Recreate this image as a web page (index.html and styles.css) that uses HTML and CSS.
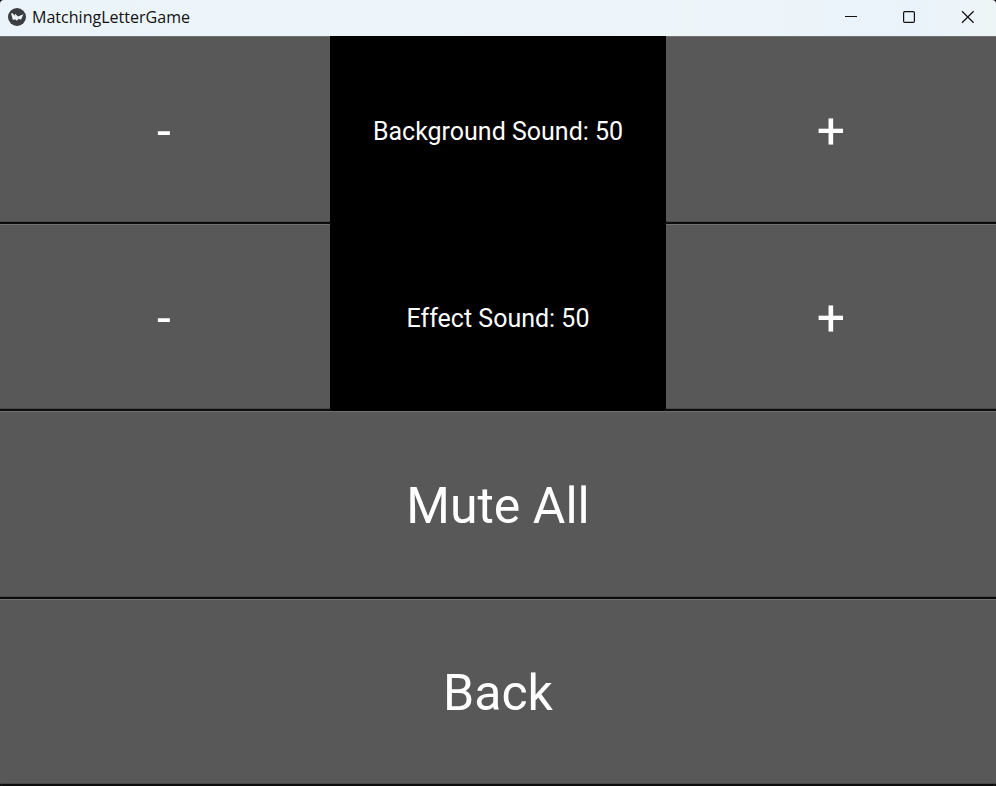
FILE: index.html
```
<!DOCTYPE html>
<html lang="en">
<head>
<meta charset="utf-8">
<title>MatchingLetterGame</title>
<link rel="stylesheet" href="styles.css">
</head>
<body>
<div class="window">
  <header class="titlebar">
    <svg class="logo" width="18" height="18" viewBox="0 0 18 18"><circle cx="9" cy="9" r="9" fill="#3b3d40"/><path d="M3 5.2 5 5.6 6.5 7.8 7.2 5.8 10 8.6 15.4 6.2 13 11.8 10.8 10.8 8.8 12.7 7.6 11.6 4.8 11.8Z" fill="#edf3f7"/></svg>
    <svg class="title" width="180" height="36"><text x="0" y="23" textLength="158" lengthAdjust="spacingAndGlyphs">MatchingLetterGame</text></svg>
    <svg class="controls" width="166" height="36" fill="none" stroke="#111" stroke-width="1.2"><path d="M15 16.5H27"/><rect x="73.6" y="11.6" width="10.8" height="10.8" rx="1.2"/><path d="M132 11.3 143.6 22.7M143.6 11.3 132 22.7"/></svg>
  </header>
  <main class="settings">
    <div class="row">
      <button class="key left">-</button>
      <div class="label">Background Sound: 50</div>
      <button class="key right">+</button>
    </div>
    <div class="row">
      <button class="key left">-</button>
      <div class="label">Effect Sound: 50</div>
      <button class="key right">+</button>
    </div>
    <button class="key">Mute All</button>
    <button class="key">Back</button>
  </main>
</div>
</body>
</html>
```
FILE: styles.css
```
* { box-sizing: border-box; }
body { margin: 0; background: #000; }
.window { width: 996px; height: 786px; display: flex; flex-direction: column; background: #3a3a3a; border-radius: 4px; overflow: hidden; }
.titlebar { height: 36px; flex: none; display: flex; align-items: center; padding-left: 8px; background: linear-gradient(90deg, #ebf4fa, #edf5f9 70%, #eaf3fb 92%, #edf5f6); }
.logo { margin: -2px 6px 0 0; }
.title { flex: none; }
.title text { font: 17px "Open Sans", "Noto Sans", sans-serif; fill: #111; }
.controls { margin-left: auto; }
.settings { flex: 1; display: grid; grid-template-rows: repeat(4, 187.5px); background: #000; }
.row { display: grid; grid-template-columns: repeat(3, 332px); }
.key { appearance: none; margin: 0; padding: 4px 0 0; border: 0 solid #0c0c0c; border-bottom-width: 2px; background: #585858; box-shadow: inset 0 1px #707070, inset 0 -1px #484848; color: #fff; font: 50px/1 Roboto, sans-serif; }
.left { border-right: 2px solid #000; padding-right: 2px; }
.right { border-left: 2px solid #000; }
.label { display: flex; align-items: center; justify-content: center; padding-top: 3px; color: #fff; font: 25px/1 Roboto, sans-serif; }
```
